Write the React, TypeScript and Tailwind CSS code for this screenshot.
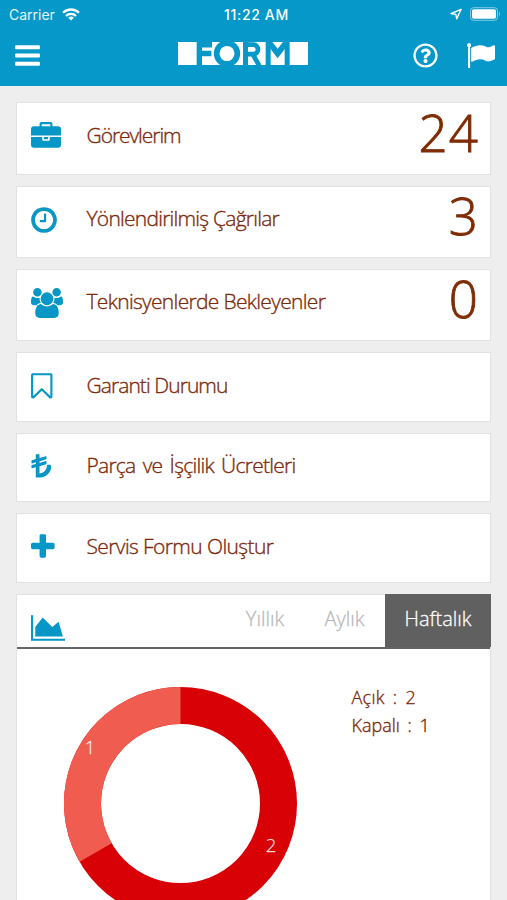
import type { ReactNode } from "react";
import { FaRegQuestionCircle } from "react-icons/fa";

type GlyphProps = { viewBox: string; width: number; height?: number; d: string };

function Glyph({ viewBox, width, height = 30, d }: GlyphProps) {
    return (
        <svg viewBox={viewBox} width={width} height={height} fill="currentColor" className="block shrink-0">
            <path d={d} />
        </svg>
    )
}

const icons = {
    briefcase: <Glyph viewBox="0 0 1792 1792" width={30} d="M640 256h512v-128h-512v128zm1152 640v480q0 66-47 113t-113 47h-1472q-66 0-113-47t-47-113v-480h672v160q0 26 19 45t45 19h320q26 0 45-19t19-45v-160h672zm-768 0v128h-256v-128h256zm768-480v384h-1792v-384q0-66 47-113t113-47h352v-160q0-40 28-68t68-28h576q40 0 68 28t28 68v160h352q66 0 113 47t47 113z" />,
    clock: <Glyph viewBox="128 0 1536 1792" width={26} d="M1024 544v448q0 14-9 23t-23 9h-320q-14 0-23-9t-9-23v-64q0-14 9-23t23-9h224v-352q0-14 9-23t23-9h64q14 0 23 9t9 23zm416 352q0-148-73-273t-198-198-273-73-273 73-198 198-73 273 73 273 198 198 273 73 273-73 198-198 73-273zm224 0q0 209-103 385.5t-279.5 279.5-385.5 103-385.5-103-279.5-279.5-103-385.5 103-385.5 279.5-279.5 385.5-103 385.5 103 279.5 279.5 103 385.5z" />,
    users: <Glyph viewBox="0 0 1920 1792" width={32} d="M593 896q-162 5-265 128h-134q-82 0-138-40.5t-56-118.5q0-353 124-353 6 0 43.5 21t97.5 42.5 119 21.5q67 0 133-23-5 37-5 66 0 139 81 256zm1071 637q0 120-73 189.5t-194 69.5h-874q-121 0-194-69.5t-73-189.5q0-53 3.5-103.5t14-109 26.5-108.5 43-97.5 62-81 85.5-53.5 111.5-20q10 0 43 21.5t73 48 107 48 135 21.5 135-21.5 107-48 73-48 43-21.5q61 0 111.5 20t85.5 53.5 62 81 43 97.5 26.5 108.5 14 109 3.5 103.5zm-1024-1277q0 106-75 181t-181 75-181-75-75-181 75-181 181-75 181 75 75 181zm704 384q0 159-112.5 271.5t-271.5 112.5-271.5-112.5-112.5-271.5 112.5-271.5 271.5-112.5 271.5 112.5 112.5 271.5zm576 225q0 78-56 118.5t-138 40.5h-134q-103-123-265-128 81-117 81-256 0-29-5-66 66 23 133 23 59 0 119-21.5t97.5-42.5 43.5-21q124 0 124 353zm-128-609q0 106-75 181t-181 75-181-75-75-181 75-181 181-75 181 75 75 181z" />,
    bookmark: <Glyph viewBox="256 0 1280 1792" width={21.5} d="M1408 256h-1024v1242l423-406 89-85 89 85 423 406v-1242zm12-128q23 0 44 9 33 13 52.5 41t19.5 62v1289q0 34-19.5 62t-52.5 41q-19 8-44 8-48 0-83-32l-441-424-441 424q-36 33-83 33-23 0-44-9-33-13-52.5-41t-19.5-62v-1289q0-34 19.5-62t52.5-41q21-9 44-9h1048z" />,
    lira: <Glyph viewBox="384 107 1216 1792" width={20.4} d="M1600 928q0 193-95 356t-258 257.5-355 94.5h-192q-14 0-23-9t-9-23v-591l-215 66q-3 1-9 1-10 0-19-6-13-10-13-26v-128q0-24 23-31l233-71v-93l-215 66q-3 1-9 1-10 0-19-6-13-10-13-26v-128q0-24 23-31l233-71v-263q0-14 9-23t23-9h160q14 0 23 9t9 23v205l375-116q15-5 28 5t13 26v128q0 24-23 31l-393 121v93l375-116q15-5 28 5t13 26v128q0 24-23 31l-393 121v431q188-13 318-151t130-328q0-14 9-23t23-9h160q14 0 23 9t9 23z" />,
    plus: <Glyph viewBox="192 0 1408 1792" width={23.6} d="M1600 736v192q0 40-28 68t-68 28h-416v416q0 40-28 68t-68 28h-192q-40 0-68-28t-28-68v-416h-416q-40 0-68-28t-28-68v-192q0-40 28-68t68-28h416v-416q0-40 28-68t68-28h192q40 0 68 28t28 68v416h416q40 0 68 28t28 68z" />,
    chart: <Glyph viewBox="0 0 2048 1792" width={34} d="M2048 1536v128h-2048v-1536h128v1408h1920zm-384-1024l256 896h-1664v-576l448-576 576 576z" />,
    bars: <Glyph viewBox="128 0 1536 1792" width={25} height={29} d="M1664 1344v128q0 26-19 45t-45 19h-1408q-26 0-45-19t-19-45v-128q0-26 19-45t45-19h1408q26 0 45 19t19 45zm0-512v128q0 26-19 45t-45 19h-1408q-26 0-45-19t-19-45v-128q0-26 19-45t45-19h1408q26 0 45 19t19 45zm0-512v128q0 26-19 45t-45 19h-1408q-26 0-45-19t-19-45v-128q0-26 19-45t45-19h1408q26 0 45 19t19 45z" />,
    flag: <Glyph viewBox="64 128 1728 1536" width={28} height={25} d="M320 256q0 72-64 110v1266q0 13-9.5 22.5t-22.5 9.5h-64q-13 0-22.5-9.5t-9.5-22.5v-1266q-64-38-64-110 0-53 37.5-90.5t90.5-37.5 90.5 37.5 37.5 90.5zm1472 64v763q0 25-12.5 38.5t-39.5 27.5q-215 116-369 116-61 0-123.5-22t-108.5-48-115.5-48-142.5-22q-192 0-464 146-17 9-33 9-26 0-45-19t-19-45v-742q0-32 31-55 21-14 79-43 236-120 421-120 107 0 200 29t219 88q38 19 88 19 54 0 117.5-21t110-47 88-47 54.5-21q26 0 45 19t19 45z" />,
}

type MenuItem = { icon: ReactNode; label: string; count?: number; tracking: string };

const menu: MenuItem[] = [
    { icon: icons.briefcase, label: "Görevlerim", count: 24, tracking: "tracking-[-1.05px]" },
    { icon: icons.clock, label: "Yönlendirilmiş Çağrılar", count: 3, tracking: "tracking-[-0.76px]" },
    { icon: icons.users, label: "Teknisyenlerde Bekleyenler", count: 0, tracking: "tracking-[-0.68px]" },
    { icon: icons.bookmark, label: "Garanti Durumu", tracking: "tracking-[-0.93px]" },
    { icon: icons.lira, label: "Parça ve İşçilik Ücretleri", tracking: "tracking-[-0.74px] [word-spacing:2.5px]" },
    { icon: icons.plus, label: "Servis Formu Oluştur", tracking: "tracking-[-0.6px]" },
]

function MenuCard({ icon, label, count, tracking }: MenuItem) {
    return (
        <div className={`flex items-start bg-white border border-[#e2e2e2] ${count === undefined ? "h-[69.5px]" : "h-[72.25px]"}`}>
            <div className={`w-[69.5px] shrink-0 pl-[14px] text-[#0797c6] ${count === undefined ? "pt-[18px]" : "pt-[18.5px]"}`}>{icon}</div>
            <span className={`pt-[16.4px] text-[21px] leading-[30px] font-light whitespace-nowrap text-[#7d2a0c] [-webkit-text-stroke:0.35px] ${tracking}`}>{label}</span>
            {count !== undefined && (
                <span className="ml-auto -mt-[1.5px] pr-[11px] text-[51px] leading-[60px] font-light tracking-[1.2px] text-[#7f2c05] [-webkit-text-stroke:0.9px]">{count}</span>
            )}
        </div>
    )
}

function StatusBar() {
    return (
        <div className="grid grid-cols-3 items-center h-[28px] px-[9px] text-[14px] font-['Inter',sans-serif]">
            <div className="flex items-center gap-[7px]">
                <span className="opacity-90">Carrier</span>
                <svg viewBox="0 0 18 13" width="18" height="13" fill="none" stroke="currentColor" strokeWidth="2.3">
                    <path d="M1 4.8a11.4 11.4 0 0 1 16 0" />
                    <path d="M4 8a7.1 7.1 0 0 1 10 0" />
                    <path d="M9 12.6L6.2 9.8a4 4 0 0 1 5.6 0z" fill="currentColor" stroke="none" />
                </svg>
            </div>
            <span className="text-center font-medium text-[14px] tracking-[0.65px] pl-[6px]">11:22 AM</span>
            <div className="flex items-center justify-end gap-[8px] -mr-[4px]">
                <svg viewBox="0 0 12 12" width="12" height="12" fill="none" stroke="currentColor" strokeWidth="1.4" strokeLinejoin="round">
                    <path d="M11 1.4L1 5.6l4.8.7 1 4.5z" />
                </svg>
                <svg viewBox="0 0 32 14" width="32" height="14">
                    <rect x="0.5" y="0.7" width="27" height="12.6" rx="3" fill="none" stroke="currentColor" strokeOpacity="0.5" />
                    <rect x="2" y="2.2" width="24" height="9.6" rx="1.8" fill="currentColor" />
                    <path d="M29 4.6q2 2.4 0 4.8z" fill="currentColor" fillOpacity="0.5" />
                </svg>
            </div>
        </div>
    )
}

// White tiles with the header colour cutting through them
function Logo() {
    return (
        <svg viewBox="0 0 390 68" width="130" height="23" preserveAspectRatio="none" className="-mt-[3.5px] block">
            <g fill="#fff">
                <path d="M0 0h56v68H0z" />
                <path d="M72 0h123v68H72z" />
                <path d="M210 0h53v68h-53z" />
                <path d="M278 0h42v68h-42z" />
                <path d="M335 0h55v68h-55z" />
            </g>
            <g fill="none" stroke="#0598c8">
                <path d="M70 8h32M70 34h30" strokeWidth="16" />
                <circle cx="147" cy="34" r="31" strokeWidth="17" />
                <path d="M208 8h18a13 13 0 0 1 0 28h-18M224 36l20 34" strokeWidth="14" />
                <path d="M274 2L299 34L324 2" strokeWidth="17" />
            </g>
        </svg>
    )
}

const tabs = [
    { label: "Yıllık", style: "w-[78px] text-[#b9b9b9]" },
    { label: "Aylık", style: "w-[81px] text-[#b9b9b9]" },
    { label: "Haftalık", style: "w-[106px] bg-[#606060] text-white" },
]

function Donut() {
    return (
        <svg viewBox="0 0 234 234" width="234" height="234" className="block">
            <circle cx="116.5" cy="117.5" r="98" fill="none" stroke="#d80206" strokeWidth="37" />
            <path d="M116.5 19.5A98 98 0 0 0 31.63 166.5" fill="none" stroke="#f05c50" strokeWidth="37" />
            <g fill="#fff" fillOpacity="0.85" fontSize="18.5" fontWeight="300" textAnchor="middle" stroke="#fff" strokeWidth="0.3" strokeOpacity="0.7">
                <text x="26" y="68">1</text>
                <text x="207" y="166">2</text>
            </g>
        </svg>
    )
}

export default function App() {
    return (
        <div className="h-[900px] w-[507px] overflow-hidden bg-[#eeeeee] font-['Open_Sans',sans-serif]">

            {/* Header */}
            <header className="h-[86px] bg-[#0598c8] text-white">
                <StatusBar />
                <div className="grid grid-cols-[163.3px_130px_1fr] items-center h-[55px] pl-[15px] pr-[12px]">
                    {icons.bars}
                    <Logo />
                    <div className="flex items-center justify-end gap-[29px]">
                        <FaRegQuestionCircle size={25} />
                        {icons.flag}
                    </div>
                </div>
            </header>

            {/* Menu */}
            <main className="flex flex-col gap-[11px] px-[16px] pt-[16.4px]">
                {menu.map(item => (
                    <MenuCard key={item.label} {...item} />
                ))}

                {/* Chart */}
                <section className="bg-white border border-[#e2e2e2] h-[340px]">
                    <div className="flex justify-between h-[54px] border-b-2 border-[#666666]">
                        <div className="pl-[14px] pt-[18px] text-[#0797c6]">{icons.chart}</div>
                        <div className="flex -mt-px -mr-px">
                            {tabs.map(tab => (
                                <button key={tab.label} className={`pb-[2px] text-[20px] font-light [-webkit-text-stroke:0.3px] ${tab.style}`}>
                                    {tab.label}
                                </button>
                            ))}
                        </div>
                    </div>
                    <div className="flex items-start pl-[47px] pt-[37px]">
                        <Donut />
                        <div className="-mt-[3px] pl-[53.5px] text-[18px] leading-[28px] font-light text-[#7d2a0c] [word-spacing:3px] [-webkit-text-stroke:0.35px]">
                            <p className="tracking-[0.3px]">Açık : 2</p>
                            <p>Kapalı : 1</p>
                        </div>
                    </div>
                </section>
            </main>
        </div>
    )
}
